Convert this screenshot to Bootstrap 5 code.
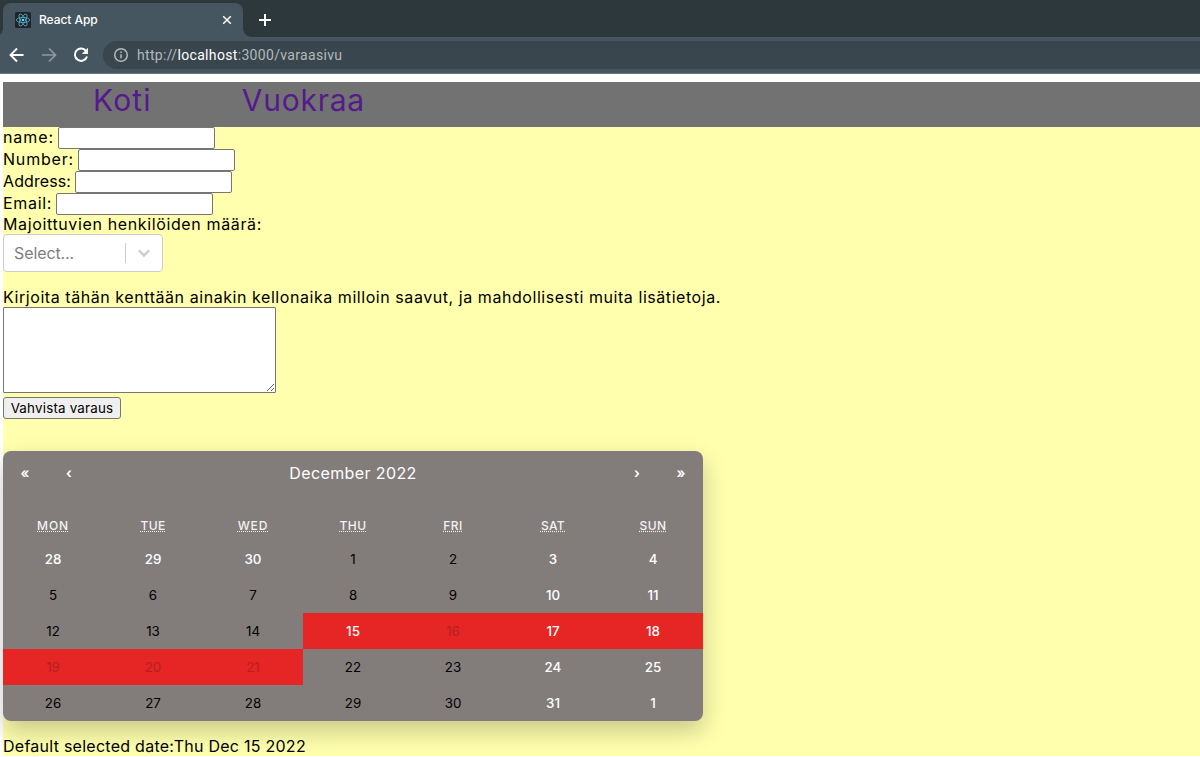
<!DOCTYPE html>
<html lang="fi">
<head>
<meta charset="utf-8">
<meta name="viewport" content="width=device-width, initial-scale=1">
<title>React App</title>
<link href="https://cdn.jsdelivr.net/npm/bootstrap@5.3.0/dist/css/bootstrap.min.css" rel="stylesheet">
<style>
body{font-family:Inter,"Open Sans",sans-serif;font-size:16px;line-height:20px;color:#000;background:#fff;overflow:hidden;height:757px}
.tabstrip{height:37px;background:#2d383d;padding-left:3px}
.browser-tab{width:240px;height:34px;background:#465660;border-radius:8px 8px 0 0;color:#fff;font:500 12px/34px Inter,sans-serif;padding:0 11px 0 12px}
.browser-tab::before,.browser-tab::after{content:"";position:absolute;bottom:0;width:8px;height:8px}
.browser-tab::before{left:-8px;background:radial-gradient(circle at 0 0,transparent 7.5px,#465660 8px)}
.browser-tab::after{right:-8px;background:radial-gradient(circle at 100% 0,transparent 7.5px,#465660 8px)}
.tab-title{margin-left:8px;letter-spacing:-.05px}
.new-tab{margin:0 0 11px 16px}
.toolbar{height:37px;background:#465660;border-bottom:1px solid #6b7880;padding-left:8px}
.icon-gap{margin-left:14px}
.address{height:28px;margin-left:13px;padding-left:10px;background:#39464d;border-radius:14px 0 0 14px;color:#b3b9bd;font:14px/28px Roboto,sans-serif}
.url{margin-left:8px;letter-spacing:.33px}
.address b{font-weight:400;color:#fff}
.page{margin:8px 0 0 3px;height:674px;background:#ffffae}
.topnav{height:45px;background:#727272;padding-left:90px;gap:90px}
.topnav a{color:#551a8b;text-decoration:none;font-size:30px;line-height:37px}
.ls-koti{letter-spacing:1.2px}.ls-vuokraa{letter-spacing:.75px}
.frow{height:22px}
.frow span{margin-top:-2px}
.frow input{width:157px;height:22px;border:1px solid #767676;border-radius:2px;background:#fff;margin-left:4px}
.ls-name{letter-spacing:.92px}.ls-number{letter-spacing:.81px}.ls-address{letter-spacing:.1px}.ls-email{letter-spacing:.67px}
.guests{height:19px;line-height:18px;letter-spacing:.63px}
.picker{width:160px;height:38px;background:#fff;border:1px solid #ccc;border-radius:4px;color:#808080;padding-left:10px;letter-spacing:-.1px}
.picker .sep{width:1px;height:20px;background:#ccc}
.hint{padding-top:15px;height:35px;letter-spacing:.558px}
textarea{width:273px;height:86px;border:1px solid #767676;resize:both;display:block;border-radius:1px}
.confirm{width:118px;height:22px;font-size:13.33px;line-height:18px;background:#efefef;border:1px solid #767676;border-radius:3px;margin-top:4px;padding:0;color:#000;letter-spacing:.22px}
.cal{width:700px;height:270px;margin-top:32px;background:#827d7b;border-radius:8px;box-shadow:0 10px 25px rgba(0,0,0,.22);color:#fff;overflow:hidden}
.cal-nav{height:44px;margin-bottom:14px}
.cal-nav .arrow{width:44px;text-align:center;font-size:14px;font-weight:600}
.cal-title{letter-spacing:.39px}
.cal-grid{display:grid;grid-template-columns:repeat(7,100px)}
.cal-grid>*{height:36px;line-height:37px;text-align:center;font-size:13.33px;color:#000}
.cal-grid>.wd{height:32px;line-height:33px;font-size:12px;color:#f2f2f2;font-weight:500;letter-spacing:.4px}
.cal-grid>.wd-wide{letter-spacing:.9px}
.wd abbr{text-decoration:underline dotted;cursor:default}
.cal-grid>.we{color:#fff;font-weight:500}
.cal-grid>.booked{background:#e62525}
.cal-grid>.off{color:#b32020}
.chosen{padding-top:15px;letter-spacing:.26px}
</style>
</head>
<body>
<header>
<div class="tabstrip d-flex align-items-end">
 <div class="browser-tab position-relative d-flex align-items-center">
  <svg width="16" height="16" viewBox="0 0 16 16"><rect width="16" height="16" rx="1.5" fill="#20232a"/><g fill="none" stroke="#4fb3cc" stroke-width=".8"><ellipse cx="8" cy="8" rx="6.7" ry="2.6"/><ellipse cx="8" cy="8" rx="6.7" ry="2.6" transform="rotate(60 8 8)"/><ellipse cx="8" cy="8" rx="6.7" ry="2.6" transform="rotate(120 8 8)"/></g><circle cx="8" cy="8" r="1.3" fill="#61dafb"/></svg>
  <span class="tab-title text-nowrap">React App</span>
  <svg class="ms-auto" width="10" height="10" viewBox="0 0 10 10"><path d="M1.2 1.2l7.6 7.6M8.8 1.2L1.2 8.8" stroke="#fff" stroke-width="1.5"/></svg>
 </div>
 <svg class="new-tab" width="12" height="12" viewBox="0 0 12 12"><path d="M6 0v12M0 6h12" stroke="#fff" stroke-width="2"/></svg>
</div>
<div class="toolbar d-flex align-items-center">
 <svg width="18" height="18" viewBox="0 0 18 18"><path d="M15.500 9H3M9 2.5L2.5 9L9 15.5" fill="none" stroke="#fff" stroke-width="1.9"/></svg>
 <svg class="icon-gap" width="18" height="18" viewBox="0 0 18 18"><path d="M2 9h13M9 2.5L15.500 9L9 15.5" fill="none" stroke="#919a9f" stroke-width="1.7"/></svg>
 <svg class="icon-gap" width="18" height="18" viewBox="0 0 18 18"><path d="M14.300 5.300A6.200 6.200 0 1 0 15 10.500" fill="none" stroke="#fff" stroke-width="2"/><path d="M16 1.800V8H9.800z" fill="#fff"/></svg>
 <div class="address flex-fill d-flex align-items-center">
  <svg width="16" height="16" viewBox="0 0 16 16"><circle cx="8" cy="8" r="6.300" fill="none" stroke="#b3b9bd" stroke-width="1.500"/><path d="M8 7.200v4M8 4.400v1.600" stroke="#b3b9bd" stroke-width="1.500"/></svg>
  <span class="url text-nowrap">http://<b>localhost</b>:3000/varaasivu</span>
 </div>
</div>
</header>
<main class="page">
<nav class="topnav d-flex"><a class="ls-koti" href="#">Koti</a><a class="ls-vuokraa" href="#">Vuokraa</a></nav>
<div class="frow d-flex align-items-center"><span class="ls-name">name:</span><input></div>
<div class="frow d-flex align-items-center"><span class="ls-number">Number:</span><input></div>
<div class="frow d-flex align-items-center"><span class="ls-address">Address:</span><input></div>
<div class="frow d-flex align-items-center"><span class="ls-email">Email:</span><input></div>
<div class="guests">Majoittuvien henkilöiden määrä:</div>
<div class="picker d-flex align-items-center"><span>Select...</span><span class="sep ms-auto"></span><svg width="36" height="20" viewBox="-8 0 36 20"><path d="M5.500 8L10 12.500L14.500 8" fill="none" stroke="#ccc" stroke-width="2.400" stroke-linecap="round"/></svg></div>
<div class="hint text-nowrap">Kirjoita tähän kenttään ainakin kellonaika milloin saavut, ja mahdollisesti muita lisätietoja.</div>
<textarea></textarea>
<button class="confirm d-block text-nowrap">Vahvista varaus</button>
<section class="cal">
 <div class="cal-nav d-flex align-items-center"><span class="arrow">«</span><span class="arrow">‹</span><span class="cal-title flex-fill text-center">December 2022</span><span class="arrow">›</span><span class="arrow">»</span></div>
 <div class="cal-grid">
 <div class="wd wd-wide"><abbr>MON</abbr></div><div class="wd"><abbr>TUE</abbr></div><div class="wd wd-wide"><abbr>WED</abbr></div><div class="wd"><abbr>THU</abbr></div><div class="wd"><abbr>FRI</abbr></div><div class="wd"><abbr>SAT</abbr></div><div class="wd"><abbr>SUN</abbr></div>
 <div class="we">28</div><div class="we">29</div><div class="we">30</div><div>1</div><div>2</div><div class="we">3</div><div class="we">4</div>
 <div>5</div><div>6</div><div>7</div><div>8</div><div>9</div><div class="we">10</div><div class="we">11</div>
 <div>12</div><div>13</div><div>14</div><div class="we booked">15</div><div class="booked off">16</div><div class="we booked">17</div><div class="we booked">18</div>
 <div class="booked off">19</div><div class="booked off">20</div><div class="booked off">21</div><div>22</div><div>23</div><div class="we">24</div><div class="we">25</div>
 <div>26</div><div>27</div><div>28</div><div>29</div><div>30</div><div class="we">31</div><div class="we">1</div>
 </div>
</section>
<div class="chosen">Default selected date:Thu Dec 15 2022</div>
</main>
<script src="https://cdn.jsdelivr.net/npm/bootstrap@5.3.0/dist/js/bootstrap.bundle.min.js"></script>
</body>
</html>
